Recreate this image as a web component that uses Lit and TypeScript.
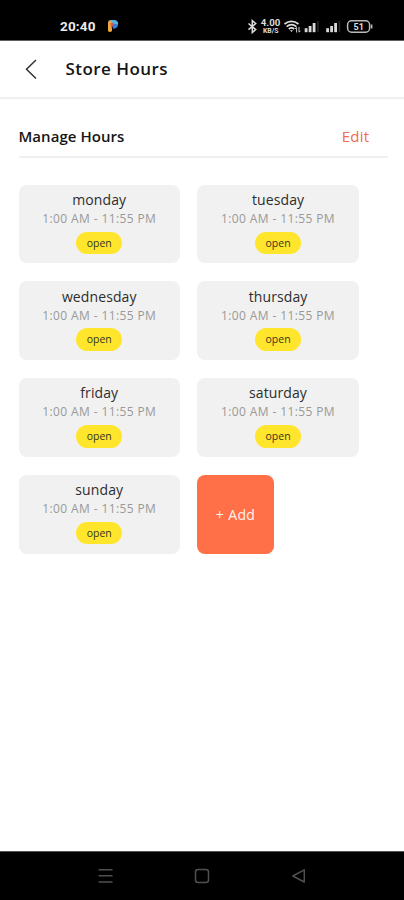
import { LitElement, html, svg, css } from "lit";
import { customElement, property } from "lit/decorators.js";

interface DayHours {
  day: string;
  hours: string;
  status: string;
}

const HOURS = "1:00 AM - 11:55 PM";
const WEEK: DayHours[] = [
  "monday",
  "tuesday",
  "wednesday",
  "thursday",
  "friday",
  "saturday",
  "sunday",
].map((day) => ({ day, hours: HOURS, status: "open" }));

@customElement("status-bar")
export class StatusBar extends LitElement {
  static styles = css`
    :host {
      display: flex;
      height: 41px;
      box-sizing: border-box;
      padding-top: 13px;
      background: #000;
      border-bottom: 1px solid #606060;
      color: #ededed;
    }
    .time {
      margin-left: 60px;
      width: 46px;
      font: 700 13.5px/27px Roboto, sans-serif;
      height: 27px;
      letter-spacing: 0.15px;
    }
    .app {
      width: 14px;
      height: 14px;
      margin-top: 6px;
    }
    .tray {
      width: 130px;
      height: 20px;
      margin: 4px 28px 0 auto;
    }
    .tray text {
      font-family: Roboto, sans-serif;
      font-weight: 700;
      fill: #ddd;
    }
  `;

  private bars(x: number) {
    return svg`
      <g fill="#d8d8d8">
        <rect x=${x} y="11.2" width="2.8" height="4"></rect>
        <rect x=${x + 4} y="9" width="2.8" height="6.2"></rect>
        <rect x=${x + 8} y="6" width="2.8" height="9.2"></rect>
      </g>
      <rect x=${x + 12.5} y="4" width="1.5" height="11" fill="#292929"></rect>`;
  }

  render() {
    return html`
      <span class="time">20:40</span>
      <svg class="app" viewBox="0 0 14 14">
        <path d="M2 4 Q2 1 5 1 L6 1 V12 Q4 14 2 12Z" fill="#f0a63b"></path>
        <path d="M4 1 H8 Q12 1 12.2 5 L7 5Z" fill="#54b4de"></path>
        <path d="M6 5 H12.2 Q12 9.5 7 9.8Z" fill="#3b7ccc"></path>
        <path d="M4.3 4 L8 4 L5.3 10 Z" fill="#dd5960"></path>
      </svg>
      <svg class="tray" viewBox="0 0 130 20">
        <path d="M2.5 6.5 L9.7 12.6 L6.3 15.5 V3.7 L9.7 6.5 L2.5 12.6" fill="none" stroke="#ddd" stroke-width="1.5"></path>
        <text x="14.8" y="9.2" font-size="9" textLength="19.5" lengthAdjust="spacingAndGlyphs">4.00</text>
        <text x="17" y="15.8" font-size="6.5" textLength="15.5" lengthAdjust="spacingAndGlyphs">KB/S</text>
        <g fill="none" stroke="#ddd" stroke-width="1.7">
          <path d="M38.5 7 Q45.5 1.8 52.5 7"></path>
          <path d="M40.6 9.6 Q45.5 5.8 50.4 9.6"></path>
          <path d="M42.8 12 Q45.5 9.8 48.2 12"></path>
        </g>
        <path d="M44 13.2 H47 L45.5 15Z" fill="#ddd"></path>
        <path d="M50.6 10.5 V15.5 M49 12 L50.6 10.3 M53 10 V15 M54.5 13.7 L53 15.3" stroke="#ccc" stroke-width="1"></path>
        ${this.bars(58.7)} ${this.bars(80.2)}
        <rect x="101.6" y="3.8" width="22" height="11.4" rx="4" fill="none" stroke="#bbb" stroke-width="1.5"></rect>
        <path d="M125.6 7.5 V11.5" stroke="#bbb" stroke-width="1.6"></path>
        <text x="107.5" y="12.8" font-size="9" textLength="10.5">51</text>
      </svg>
    `;
  }
}

@customElement("day-card")
export class DayCard extends LitElement {
  @property({ attribute: false }) entry!: DayHours;

  static styles = css`
    :host {
      display: flex;
      flex-direction: column;
      align-items: center;
      box-sizing: border-box;
      height: 78.8px;
      padding-top: 5.2px;
      border-radius: 8px;
      background: #f1f1f1;
    }
    .day {
      font-size: 14px;
      line-height: 20px;
      color: #2d2d2d;
      letter-spacing: 0.1px;
    }
    .hours {
      font-size: 12px;
      line-height: 17px;
      color: #999;
      white-space: nowrap;
      letter-spacing: 0.38px;
    }
    .status {
      margin-top: 4.8px;
      width: 46px;
      height: 22.5px;
      border-radius: 12px;
      background: #ffe62c;
      color: #37351f;
      font-size: 10.5px;
      line-height: 22px;
      text-align: center;
    }
  `;

  render() {
    const { day, hours, status } = this.entry;
    return html`
      <span class="day">${day}</span>
      <span class="hours">${hours}</span>
      <span class="status">${status}</span>
    `;
  }
}

@customElement("nav-bar")
export class NavBar extends LitElement {
  static styles = css`
    :host {
      display: flex;
      height: 49px;
      box-sizing: border-box;
      padding: 16px 0 0 97px;
      gap: 80.5px;
      background: #000;
      border-top: 1px solid #555;
    }
    svg {
      width: 16px;
      height: 16px;
      fill: none;
      stroke: #505050;
      stroke-width: 1.5;
    }
  `;

  render() {
    return html`
      <svg viewBox="0 0 16 16"><path d="M1.5 1.7 H15.5 M1.5 7.8 H15.5 M1.5 14 H15.5"></path></svg>
      <svg viewBox="0 0 16 16"><rect x="1.5" y="1.5" width="13" height="13" rx="2.5"></rect></svg>
      <svg viewBox="0 0 16 16"><path d="M14.3 1.8 V14 L2.8 8Z" stroke-linejoin="round"></path></svg>
    `;
  }
}

@customElement("app-root")
export class AppRoot extends LitElement {
  static styles = css`
    :host {
      display: flex;
      flex-direction: column;
      height: 900px;
      overflow: hidden;
      background: #fff;
      font-family: "Open Sans", "Noto Sans", sans-serif;
    }
    .header {
      display: flex;
      align-items: center;
      height: 58px;
      box-sizing: border-box;
      padding: 0 0 1px 24px;
      border-bottom: 2px solid #f0f0f0;
    }
    .back {
      width: 14px;
      height: 20px;
      margin-right: 27.5px;
      fill: none;
      stroke: #333;
      stroke-width: 1.5;
    }
    .title {
      font-size: 17px;
      font-weight: 600;
      color: #151515;
      letter-spacing: 0.45px;
    }
    .content {
      flex: 1;
      padding: 21px 16px 0 18.5px;
    }
    .section {
      display: flex;
      justify-content: space-between;
      align-items: center;
      height: 38px;
      box-sizing: border-box;
      padding: 0 18.5px 5px 0;
      border-bottom: 2px solid #f0f0f0;
    }
    .heading {
      font-size: 15px;
      font-weight: 600;
      color: #151515;
      letter-spacing: 0.05px;
    }
    .edit {
      font-size: 15px;
      color: #f26b4a;
      letter-spacing: 0.3px;
    }
    .grid {
      display: grid;
      grid-template-columns: 161.5px 161.5px;
      gap: 18px 17.3px;
      margin-top: 26.6px;
    }
    .add {
      display: flex;
      align-items: center;
      justify-content: center;
      width: 76.5px;
      border-radius: 8px;
      background: #ff7048;
      color: #fff3ee;
      font-size: 14px;
      letter-spacing: 0.35px;
    }
  `;

  render() {
    return html`
      <status-bar></status-bar>
      <div class="header">
        <svg class="back" viewBox="0 0 14 20"><path d="M12 1 L2.5 10.2 L12 19.5"></path></svg>
        <span class="title">Store Hours</span>
      </div>
      <div class="content">
        <div class="section">
          <span class="heading">Manage Hours</span>
          <span class="edit">Edit</span>
        </div>
        <div class="grid">
          ${WEEK.map((entry) => html`<day-card .entry=${entry}></day-card>`)}
          <div class="add">+ Add</div>
        </div>
      </div>
      <nav-bar></nav-bar>
    `;
  }
}
